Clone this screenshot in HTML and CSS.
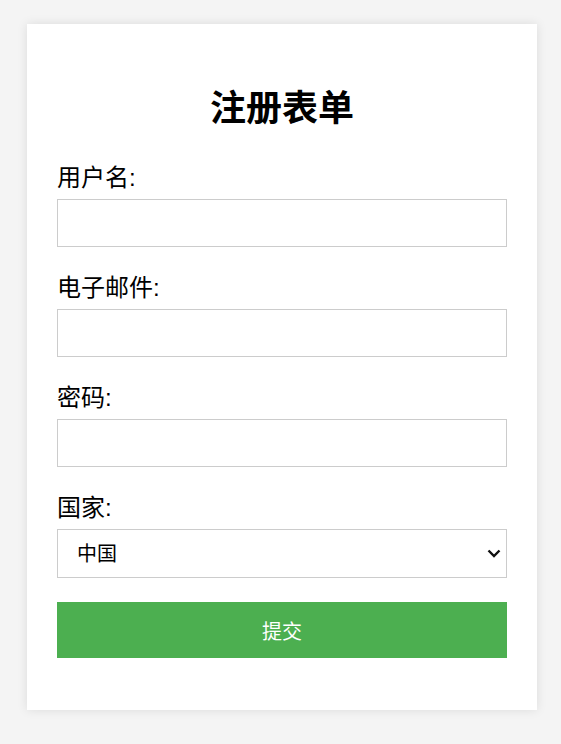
FILE: index.html
```html
<!DOCTYPE html>
<html lang="zh-CN">
<head>
<meta charset="utf-8">
<title>注册表单</title>
<link rel="stylesheet" href="styles.css">
</head>
<body>
<div class="page">
  <div class="card">
    <h1 class="title">注册表单</h1>
    <form class="form">
      <label class="label" for="username">用户名:</label>
      <input class="field" type="text" id="username">
      <label class="label" for="email">电子邮件:</label>
      <input class="field" type="email" id="email">
      <label class="label" for="password">密码:</label>
      <input class="field" type="password" id="password">
      <label class="label" for="country">国家:</label>
      <div class="select-wrap">
        <select class="select" id="country">
          <option>中国</option>
        </select>
        <svg class="chevron" width="14" height="9" viewBox="0 0 14 9"><path d="M1.5 1.5 L7 7 L12.5 1.5" fill="none" stroke="#111" stroke-width="2.4" stroke-linecap="butt"/></svg>
      </div>
      <button class="submit" type="button">提交</button>
    </form>
  </div>
</div>
</body>
</html>
```
FILE: styles.css
```css
html, body {
  margin: 0;
  padding: 0;
}
body {
  background: #f4f4f4;
  font-family: "Liberation Sans", "Noto Sans CJK SC", sans-serif;
  color: #000;
}
.page {
  padding: 24px 24px 34px 27px;
}
.card {
  width: 450px;
  padding: 30px 30px 30px;
  background: #fff;
  box-shadow: 0 0 10px rgba(0, 0, 0, 0.1);
}
.title {
  margin: 35px 0 34px;
  font-size: 36px;
  line-height: 40px;
  font-weight: bold;
  text-align: center;
}
.form {
  display: flex;
  flex-direction: column;
}
.label {
  display: block;
  font-size: 24px;
  line-height: 30px;
  margin-bottom: 6px;
}
.field {
  box-sizing: border-box;
  width: 100%;
  height: 48px;
  margin: 0 0 26px;
  border: 1px solid #ccc;
  padding: 0 12px;
  font-size: 18px;
  font-family: inherit;
  outline: none;
}
.select-wrap {
  position: relative;
  margin-bottom: 24px;
}
.select {
  box-sizing: border-box;
  width: 100%;
  height: 49px;
  border: 1px solid #ccc;
  border-radius: 0;
  background: #fff;
  padding: 0 19px;
  font-size: 20px;
  font-family: inherit;
  color: #000;
  -webkit-appearance: none;
  appearance: none;
  outline: none;
}
.chevron {
  position: absolute;
  right: 6px;
  top: 20px;
  pointer-events: none;
}
.submit {
  height: 56px;
  border: none;
  background: #4caf50;
  color: #fff;
  font-size: 20px;
  font-family: inherit;
  margin-bottom: 22px;
  cursor: pointer;
}
```
